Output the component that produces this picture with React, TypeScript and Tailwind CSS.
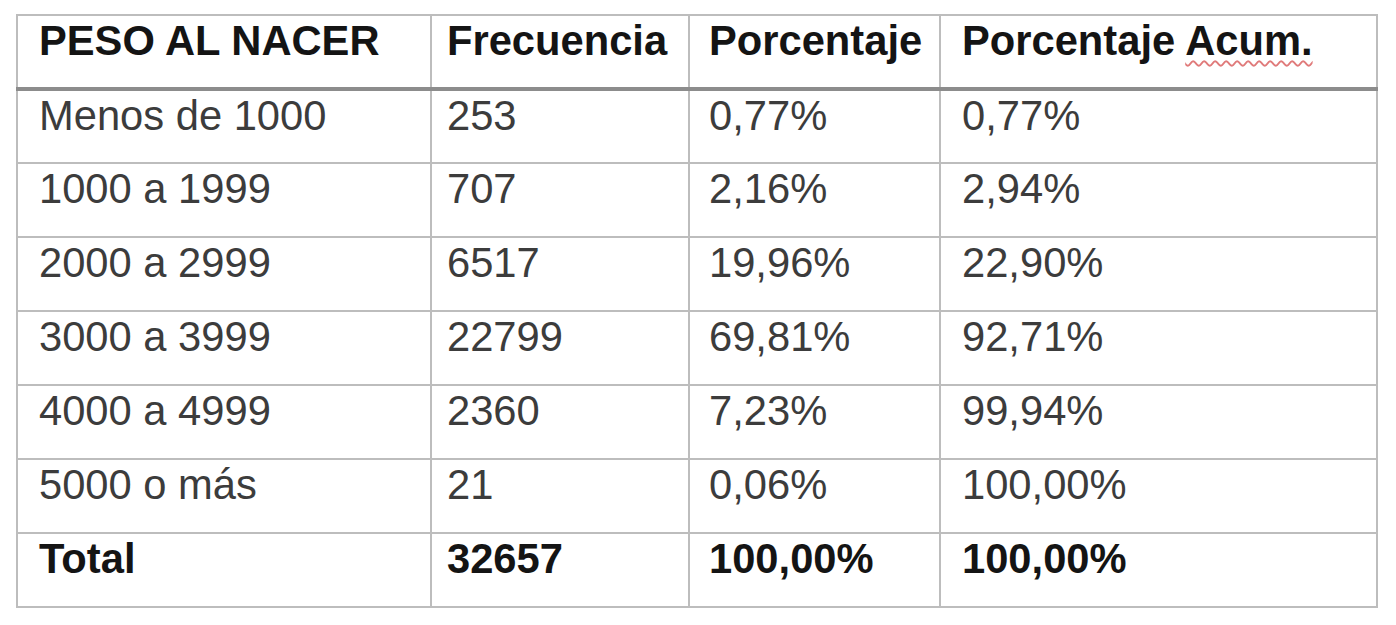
const rows = [
  ["Menos de 1000", "253", "0,77%", "0,77%"],
  ["1000 a 1999", "707", "2,16%", "2,94%"],
  ["2000 a 2999", "6517", "19,96%", "22,90%"],
  ["3000 a 3999", "22799", "69,81%", "92,71%"],
  ["4000 a 4999", "2360", "7,23%", "99,94%"],
  ["5000 o más", "21", "0,06%", "100,00%"],
];

const cell = "h-[74px] border-2 border-[#bdbdbd] pt-[1px] align-top leading-[1.15]";
const pads = ["pl-[21px]", "pl-[15px]", "pl-[19px]", "pl-[21px]"];

export default function App() {
  return (
    <div className="min-h-[625px] w-[1396px] bg-white pl-[16px] pt-[14px] font-['Liberation_Sans',Arial,sans-serif] text-[41.7px]">
      <table className="table-fixed border-collapse border-2 border-[#c8c8c8]">
        <colgroup>
          <col className="w-[414px]" />
          <col className="w-[258px]" />
          <col className="w-[251px]" />
          <col className="w-[437px]" />
        </colgroup>
        <thead>
          <tr className="border-b-4 border-b-[#8c8c8c] font-bold text-[#141414]">
            <th className={`${cell} ${pads[0]} text-left`}>PESO AL NACER</th>
            <th className={`${cell} ${pads[1]} text-left`}>Frecuencia</th>
            <th className={`${cell} ${pads[2]} text-left`}>Porcentaje</th>
            <th className={`${cell} ${pads[3]} text-left`}>
              Porcentaje{" "}
              <span className="underline decoration-wavy decoration-[#e07a7a] decoration-[1.5px] underline-offset-[5px]">
                Acum.
              </span>
            </th>
          </tr>
        </thead>
        <tbody className="text-[#3c3c3c]">
          {rows.map((r) => (
            <tr key={r[0]}>
              {r.map((v, i) => (
                <td key={i} className={`${cell} ${pads[i]}`}>
                  {v}
                </td>
              ))}
            </tr>
          ))}
          <tr className="font-bold text-[#141414]">
            <td className={`${cell} ${pads[0]}`}>Total</td>
            <td className={`${cell} ${pads[1]}`}>32657</td>
            <td className={`${cell} ${pads[2]}`}>100,00%</td>
            <td className={`${cell} ${pads[3]}`}>100,00%</td>
          </tr>
        </tbody>
      </table>
    </div>
  );
}
